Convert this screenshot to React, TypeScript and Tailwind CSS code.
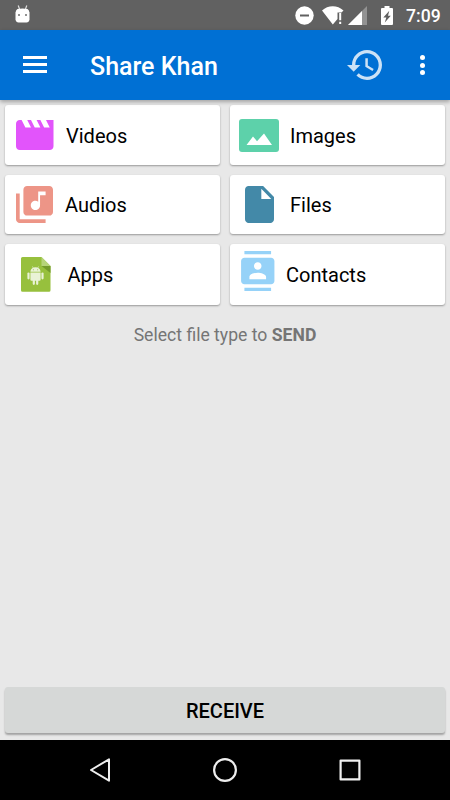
import React from "react";

type FileType = {
    label: string;
    icon: React.ReactNode;
    className: string;
    labelClassName: string;
};

const VideoIcon = () => (
    <svg className="w-[37.5px] h-[30px] shrink-0 fill-[#e254fb]" viewBox="2 4 20 16" preserveAspectRatio="none">
        <path d="M18 4l2 4h-3l-2-4h-2l2 4h-3l-2-4H8l2 4H7L5 4H4c-1.1 0-1.99.9-1.99 2L2 18c0 1.1.9 2 2 2h16c1.1 0 2-.9 2-2V4h-4z" />
    </svg>
);

const ImageIcon = () => (
    <svg className="w-10 h-[33px] shrink-0" viewBox="0 0 40 33">
        <rect width="40" height="33" rx="3" fill="#5dd1aa" />
        <path d="M7.5 26l6.5-8.6 4 4.8 7-7.7L33 26z" fill="#fff" />
    </svg>
);

const AudioIcon = () => (
    <svg className="w-[37px] h-[37px] shrink-0 fill-[#ed9587]" viewBox="2 2 20 20">
        <path d="M20 2H8c-1.1 0-2 .9-2 2v12c0 1.1.9 2 2 2h12c1.1 0 2-.9 2-2V4c0-1.1-.9-2-2-2zm-2 5h-3v5.5c0 1.38-1.12 2.5-2.5 2.5S10 13.88 10 12.5s1.12-2.5 2.5-2.5c.57 0 1.08.19 1.5.51V5h4v2zM4 6H2v14c0 1.1.9 2 2 2h14v-2H4V6z" />
    </svg>
);

const DocumentIcon = () => (
    <svg className="w-[29px] h-[37px] shrink-0 fill-[#4389a8]" viewBox="4 2 16 20" preserveAspectRatio="none">
        <path d="M6 2c-1.1 0-1.99.9-1.99 2L4 20c0 1.1.89 2 1.99 2H18c1.1 0 2-.9 2-2V8l-6-6H6zm7 7V3.5L18.5 9H13z" />
    </svg>
);

const ApkIcon = () => (
    <svg className="w-[30px] h-[35px] shrink-0" viewBox="0 0 30 35">
        <path d="M1.5 0H20.5l9 9v24.2a1.5 1.5 0 0 1-1.5 1.5H1.5A1.5 1.5 0 0 1 0 33.200V1.5A1.5 1.5 0 0 1 1.5 0z" fill="#97c03d" />
        <path d="M20.5 9h9v7z" fill="#739a2b" />
        <path d="M20.5 0l9 9h-9z" fill="#b6d47a" />
        <g fill="#e9f2d6">
            <path d="M9.4 14.8c.1-2 1.2-3.3 2.5-4l-.8-1.3.4-.2.8 1.3a6 6 0 0 1 4.400 0l.8-1.3.4.2-.8 1.3c1.3.7 2.4 2 2.5 4z" />
            <path d="M9.4 15.6h10.2v7.2a1 1 0 0 1-1 1h-1.3v3a1.1 1.1 0 0 1-2.2 0v-3h-1.2v3a1.1 1.1 0 0 1-2.2 0v-3h-1.3a1 1 0 0 1-1-1z" />
            <rect x="6.4" y="15.4" width="2.2" height="7" rx="1.1" />
            <rect x="20.4" y="15.4" width="2.2" height="7" rx="1.1" />
        </g>
        <circle cx="12.4" cy="12.8" r=".5" fill="#97c03d" />
        <circle cx="16.6" cy="12.8" r=".5" fill="#97c03d" />
    </svg>
);

const ContactIcon = () => (
    <svg className="w-[33.5px] h-10 shrink-0 fill-[#96d2f8]" viewBox="2 0 20 24">
        <path d="M20 0H4v2h16V0zM4 24h16v-2H4v2zM20 4H4c-1.1 0-2 .9-2 2v12c0 1.1.9 2 2 2h16c1.1 0 2-.9 2-2V6c0-1.1-.9-2-2-2zm-8 2.75c1.24 0 2.25 1.01 2.25 2.25s-1.01 2.25-2.25 2.25S9.75 10.24 9.75 9 10.76 6.75 12 6.75zM17 17H7v-1.5c0-1.67 3.33-2.5 5-2.5s5 .83 5 2.5V17z" />
    </svg>
);

const fileTypes: FileType[] = [
    { label: "Videos", icon: <VideoIcon />, className: "h-[60px] pl-[11px]", labelClassName: "ml-[12.5px] pt-px" },
    { label: "Images", icon: <ImageIcon />, className: "h-[60px] pl-[9px]", labelClassName: "ml-[11px] pt-px" },
    { label: "Audios", icon: <AudioIcon />, className: "h-[59px] pl-[11px]", labelClassName: "ml-3" },
    { label: "Files", icon: <DocumentIcon />, className: "h-[59px] pl-[15px]", labelClassName: "ml-4" },
    { label: "Apps", icon: <ApkIcon />, className: "h-[61px] pl-4", labelClassName: "ml-[16.5px]" },
    { label: "Contacts", icon: <ContactIcon />, className: "h-[61px] pl-[11px] pb-[7px]", labelClassName: "ml-[11.5px] pt-[7px]" },
];

function StatusBar() {
    return (
        <div className="h-[30px] bg-[#616161] flex items-center pl-[15px] pr-[10px]">
            <svg className="w-[15px] h-[18px] mb-[2px]" viewBox="0 0 15 18">
                <path d="M3.2.5l1.5 4M11.8.5l-1.5 4" stroke="#ddd" strokeWidth="1.2" />
                <path d="M2.5 4Q7.5 2.8 12.5 4Q14 4.5 14.5 7.5V14.5Q14 17.5 11.5 17.5H3.5Q1 17.5.5 14.5V7.5Q1 4.5 2.5 4z" fill="#fff" />
                <path d="M3 9h2v2H3zM10 9h2v2h-2z" fill="#929292" />
            </svg>
            <div className="ml-auto flex items-center">
                <svg className="w-[19px] h-[19px]" viewBox="0 0 19 19">
                    <circle cx="9.5" cy="9.5" r="9.2" fill="#fff" />
                    <path d="M5 8.5h9v2H5z" fill="#616161" />
                </svg>
                <svg className="w-[22px] h-[19px] ml-2" viewBox="0 0 22 19">
                    <path d="M0 4.5C6-1.2 15.5-1.2 21.5 4.5L19.5 6.5H15.5V13L10.8 18.5z" fill="#fff" />
                    <path d="M17.2 7h2v7.2h-2zM17.2 15.7h2v2.3h-2z" fill="#fff" />
                </svg>
                <svg className="w-[19px] h-[19px] ml-[4px]" viewBox="0 0 19 19">
                    <path d="M0 19L19 0v19z" fill="#929292" />
                    <path d="M0 19L14 5v14z" fill="#fff" />
                </svg>
                <svg className="w-[12px] h-[19px] ml-[14px]" viewBox="0 0 12 19">
                    <path d="M3.5 0h5v2H11q1 0 1 1v15q0 1-1 1H1q-1 0-1-1V3q0-1 1-1h2.5z" fill="#fff" />
                    <path d="M8.300 4.800L2.300 11.500h3L3.800 16.500l6-6.800H7z" fill="#616161" />
                </svg>
                <span className="ml-[13px] text-[17.6px] leading-[30px] font-medium text-white w-[34px] whitespace-nowrap pt-px">7:09</span>
            </div>
        </div>
    );
}

function AppBar() {
    return (
        <header className="relative h-[70px] bg-[#0070d4] flex items-center pl-[23px] pr-[25px] shadow-[0_2px_4px_rgba(0,0,0,0.3)]">
            <button className="flex flex-col gap-[4px] w-6 mb-[1px]" aria-label="Menu">
                <span className="h-[3px] bg-white" />
                <span className="h-[3px] bg-white" />
                <span className="h-[3px] bg-white" />
            </button>
            <h1 className="ml-[43px] pt-[3px] text-[25px] font-medium text-white whitespace-nowrap">Share Khan</h1>
            <button className="ml-auto" aria-label="History">
                <svg className="w-[35px] h-[30px] fill-[#cce2f6]" viewBox="1 3 21 18">
                    <path d="M13 3c-4.97 0-9 4.03-9 9H1l3.89 3.89.07.14L9 12H6c0-3.87 3.13-7 7-7s7 3.13 7 7-3.13 7-7 7c-1.93 0-3.68-.79-4.94-2.06l-1.42 1.42C8.27 19.99 10.51 21 13 21c4.97 0 9-4.03 9-9s-4.03-9-9-9zm-1 5v5l4.28 2.54.72-1.21-3.5-2.08V8H12z" />
                </svg>
            </button>
            <button className="ml-[38px] flex flex-col gap-[2.5px]" aria-label="More">
                <span className="size-[5px] rounded-full bg-white" />
                <span className="size-[5px] rounded-full bg-white" />
                <span className="size-[5px] rounded-full bg-white" />
            </button>
        </header>
    );
}

function NavigationBar() {
    return (
        <nav className="h-[60px] bg-black flex items-center justify-between pl-[89px] pr-[89px]">
            <svg className="w-[22px] h-[26px]" viewBox="0 0 22 26" fill="none" stroke="#eee" strokeWidth="2" strokeLinejoin="round">
                <path d="M2 13L20 2.3v21.4z" />
            </svg>
            <svg className="w-[26px] h-[26px]" viewBox="0 0 26 26" fill="none" stroke="#eee" strokeWidth="2.2">
                <circle cx="13" cy="13" r="10.9" />
            </svg>
            <svg className="w-[22px] h-[22px]" viewBox="0 0 22 22" fill="none" stroke="#eee" strokeWidth="2.2" strokeLinejoin="round">
                <rect x="1.6" y="1.6" width="18.8" height="18.8" />
            </svg>
        </nav>
    );
}

export default function App() {
    return (
        <div className="w-[450px] h-[800px] flex flex-col overflow-hidden bg-[#e8e8e8] font-['Roboto',sans-serif]">
            <StatusBar />
            <AppBar />
            <main className="flex-1 flex flex-col px-[5px] pt-[5px] pb-[7px]">
                <div className="grid grid-cols-2 gap-x-[10px] gap-y-[10px]">
                    {fileTypes.map((type) => (
                        <button
                            key={type.label}
                            className={`${type.className} flex items-center bg-white rounded-[3px] text-left shadow-[0_1px_2px_rgba(0,0,0,0.35)]`}
                        >
                            {type.icon}
                            <span className={`${type.labelClassName} text-[20px] leading-6 text-black`}>{type.label}</span>
                        </button>
                    ))}
                </div>
                <p className="mt-[18px] text-center text-[17.6px] leading-6 text-[#757575]">
                    Select file type to <span className="font-bold">SEND</span>
                </p>
                <button className="mt-auto h-[46px] pt-[2px] rounded-[3px] bg-[#d6d8d7] text-[20px] font-medium text-black shadow-[0_2px_2px_rgba(0,0,0,0.3)]">
                    RECEIVE
                </button>
            </main>
            <NavigationBar />
        </div>
    );
}
